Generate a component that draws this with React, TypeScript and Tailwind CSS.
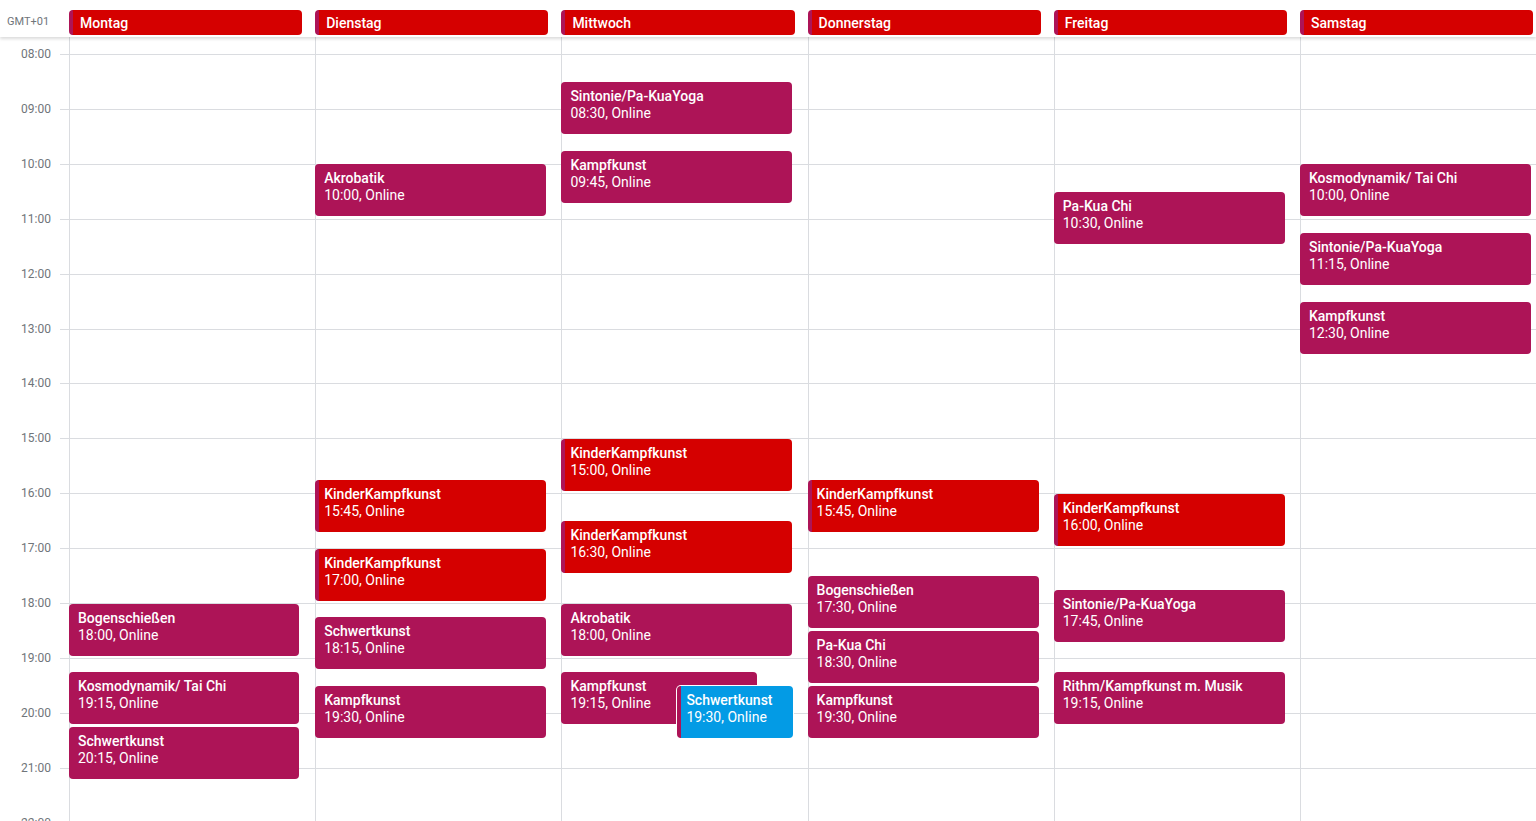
import React from "react";

type Ev = { title: string; time: string; start: number; color?: "red" | "blue"; left?: number; width?: number };

const H = 54.92;
const days: { name: string; events: Ev[] }[] = [
  {
    name: "Montag",
    events: [
      { title: "Bogenschießen", time: "18:00", start: 18, width: 230 },
      { title: "Kosmodynamik/ Tai Chi", time: "19:15", start: 19.25, width: 230 },
      { title: "Schwertkunst", time: "20:15", start: 20.25, width: 230 },
    ],
  },
  {
    name: "Dienstag",
    events: [
      { title: "Akrobatik", time: "10:00", start: 10 },
      { title: "KinderKampfkunst", time: "15:45", start: 15.75, color: "red" },
      { title: "KinderKampfkunst", time: "17:00", start: 17, color: "red" },
      { title: "Schwertkunst", time: "18:15", start: 18.25 },
      { title: "Kampfkunst", time: "19:30", start: 19.5 },
    ],
  },
  {
    name: "Mittwoch",
    events: [
      { title: "Sintonie/Pa-KuaYoga", time: "08:30", start: 8.5 },
      { title: "Kampfkunst", time: "09:45", start: 9.75 },
      { title: "KinderKampfkunst", time: "15:00", start: 15, color: "red" },
      { title: "KinderKampfkunst", time: "16:30", start: 16.5, color: "red" },
      { title: "Akrobatik", time: "18:00", start: 18 },
      { title: "Kampfkunst", time: "19:15", start: 19.25, width: 196 },
      { title: "Schwertkunst", time: "19:30", start: 19.5, color: "blue", left: 116, width: 116 },
    ],
  },
  {
    name: "Donnerstag",
    events: [
      { title: "KinderKampfkunst", time: "15:45", start: 15.75, color: "red" },
      { title: "Bogenschießen", time: "17:30", start: 17.5 },
      { title: "Pa-Kua Chi", time: "18:30", start: 18.5 },
      { title: "Kampfkunst", time: "19:30", start: 19.5 },
    ],
  },
  {
    name: "Freitag",
    events: [
      { title: "Pa-Kua Chi", time: "10:30", start: 10.5 },
      { title: "KinderKampfkunst", time: "16:00", start: 16, color: "red" },
      { title: "Sintonie/Pa-KuaYoga", time: "17:45", start: 17.75 },
      { title: "Rithm/Kampfkunst m. Musik", time: "19:15", start: 19.25 },
    ],
  },
  {
    name: "Samstag",
    events: [
      { title: "Kosmodynamik/ Tai Chi", time: "10:00", start: 10 },
      { title: "Sintonie/Pa-KuaYoga", time: "11:15", start: 11.25 },
      { title: "Kampfkunst", time: "12:30", start: 12.5 },
    ],
  },
];

const hours = ["08:00", "09:00", "10:00", "11:00", "12:00", "13:00", "14:00", "15:00", "16:00", "17:00", "18:00", "19:00", "20:00", "21:00", "22:00"];

function EventBox({ ev }: { ev: Ev }) {
  const top = Math.round(17 + (ev.start - 8) * H + 0.5);
  const bg =
    ev.color === "red"
      ? "bg-[#d50000] border-l-4 border-[#ad1457]"
      : ev.color === "blue"
      ? "bg-[#039be5] border-l-4 border-[#ad1457] shadow-[0_0_0_1px_#ffffff]"
      : "bg-[#ad1457]";
  return (
    <div
      className={`absolute rounded-[4px] text-white text-[14px] leading-[17px] overflow-hidden ${bg} ${ev.color ? "pl-[5px]" : "pl-[9px]"} pt-[6px]`}
      style={{ top, height: 52, left: (ev.left ?? 0) - 1, width: ev.width ?? 231 }}
    >
      <div className="font-medium whitespace-nowrap">{ev.title}</div>
      <div className="whitespace-nowrap">{ev.time}, Online</div>
    </div>
  );
}

export default function App() {
  return (
    <div className="w-[1536px] h-[821px] overflow-hidden bg-white font-['Roboto','Liberation_Sans',sans-serif]">
      <header className="relative z-10 flex h-[37px] bg-white shadow-[0_2px_3px_rgba(0,0,0,0.14)]">
        <div className="w-[69px] shrink-0 pl-[7px] pt-[15px] text-[11px] leading-[14px] text-[#70757a]">GMT+01</div>
        <div className="grid grid-cols-[repeat(6,246.2px)] shrink-0">
          {days.map((d) => (
            <div key={d.name} className="pt-[10px] pr-[13px]">
              <div className="flex h-[25px] items-center rounded-[4px] border-l-4 border-[#ad1457] bg-[#d50000] pl-[7px] pt-[2px] text-[14px] font-medium leading-[17px] text-white">
                {d.name}
              </div>
            </div>
          ))}
        </div>
      </header>
      <main className="flex">
        <div className="w-[69px] shrink-0">
          <div className="h-[17px]" />
          {hours.map((h) => (
            <div key={h} className="flex h-[54.92px]">
              <div className="w-[51px] -mt-[7px] h-[15px] text-right text-[12px] leading-[15px] text-[#70757a]">{h}</div>
              <div className="ml-[9px] w-[9px] border-t border-[#dadce0]" />
            </div>
          ))}
        </div>
        <div className="grid grid-cols-[repeat(6,246.2px)] shrink-0">
          {days.map((d) => (
            <div key={d.name} className="relative border-l border-[#dadce0]">
              <div className="h-[17px]" />
              {hours.map((h) => (
                <div key={h} className="h-[54.92px] border-t border-[#dadce0]" />
              ))}
              {d.events.map((ev, i) => (
                <EventBox key={i} ev={ev} />
              ))}
            </div>
          ))}
        </div>
      </main>
    </div>
  );
}
